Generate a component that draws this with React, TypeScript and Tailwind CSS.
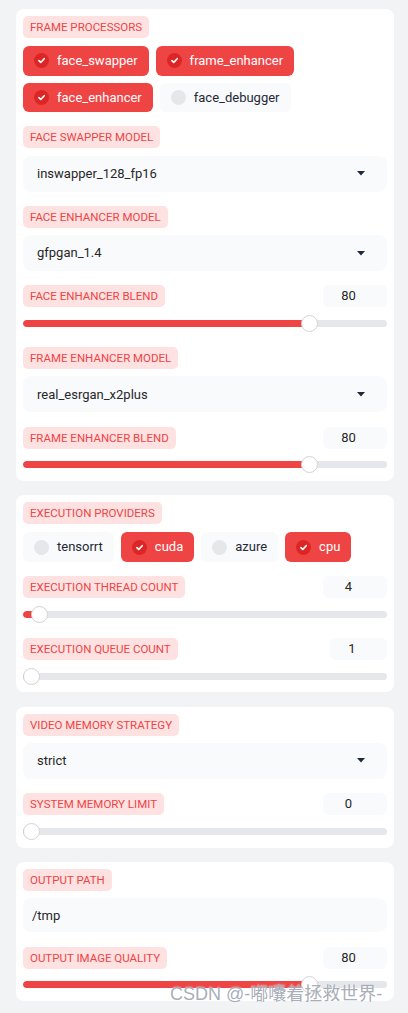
import React from "react";

const FONT = { fontFamily: 'Roboto, "Noto Sans", "Noto Sans CJK SC", sans-serif' };

function Label({ children }: { children: React.ReactNode }) {
  return (
    <div className="self-start h-[22px] leading-[22px] px-[7px] rounded-[5px] bg-[#fee2e2] text-[#ef4444] text-[11.5px] uppercase whitespace-nowrap">
      {children}
    </div>
  );
}

function Check() {
  return (
    <span className="w-[15px] h-[15px] rounded-full bg-[#dc2626] flex items-center justify-center shrink-0">
      <svg width="9" height="9" viewBox="0 0 12 12" fill="none">
        <path d="M2.5 6.3 L5 8.6 L9.6 3.6" stroke="white" strokeWidth="2.2" strokeLinecap="round" strokeLinejoin="round" />
      </svg>
    </span>
  );
}

function Chip({ label, on }: { label: string; on: boolean }) {
  return (
    <div
      className={
        on
          ? "h-[29.5px] flex items-center gap-[8px] pl-[11px] pr-[11px] rounded-[6px] bg-[#ef4444] text-white text-[13px]"
          : "h-[29.5px] flex items-center gap-[8px] pl-[11px] pr-[11px] rounded-[6px] bg-[#f9fafb] text-[#1f2937] text-[13px]"
      }
    >
      {on ? <Check /> : <span className="w-[15px] h-[15px] rounded-full bg-[#e5e7eb] shrink-0" />}
      <span>{label}</span>
    </div>
  );
}

function Dropdown({ value }: { value: string }) {
  return (
    <div className="h-[36px] rounded-[8px] bg-[#f9fafb] flex items-center justify-between pl-[14px] pr-[22px] text-[13px] text-[#27272a]">
      <span>{value}</span>
      <svg width="8" height="5" viewBox="0 0 8 5">
        <path d="M0 0 H8 L4 4.5 Z" fill="#1f2937" />
      </svg>
    </div>
  );
}

function Slider({ pct }: { pct: number }) {
  const usable = 364 - 17;
  const left = pct * usable;
  return (
    <div className="relative h-[18px]">
      <div className="absolute left-0 right-0 top-[5.5px] h-[7px] rounded-full bg-[#e5e7eb] overflow-hidden">
        <div className="h-full bg-[#ef4444] rounded-full" style={{ width: left + 8 }} />
      </div>
      <div
        className="absolute top-[0.5px] w-[17px] h-[17px] rounded-full bg-white border border-[#d4d4d8]"
        style={{ left }}
      />
    </div>
  );
}

function NumberRow({ label, value, narrow }: { label: string; value: string; narrow?: boolean }) {
  return (
    <div className="flex items-center justify-between">
      <Label>{label}</Label>
      <div
        className={
          (narrow ? "w-[57px]" : "w-[64px]") +
          " h-[22px] rounded-[6px] bg-[#f9fafb] text-[13px] text-[#27272a] text-center pr-[13px] leading-[22px]"
        }
      >
        {value}
      </div>
    </div>
  );
}

function Group({ children, gap8 }: { children: React.ReactNode; gap8?: boolean }) {
  return <div className={gap8 ? "flex flex-col gap-[8px]" : "flex flex-col gap-[7.3px]"}>{children}</div>;
}

function Card({ children }: { children: React.ReactNode }) {
  return <div className="bg-white rounded-[8px] p-[7px] flex flex-col gap-[14.3px]">{children}</div>;
}

export default function App() {
  return (
    <div className="relative min-h-[1013px] bg-[#f2f3f5] pl-[16px] pr-[14px] pt-[9px] pb-[11px] flex flex-col gap-[14.5px]" style={FONT}>
      <Card>
        <Group gap8>
          <Label>Frame Processors</Label>
          <div className="flex flex-wrap gap-[7px]">
            <Chip label="face_swapper" on />
            <Chip label="frame_enhancer" on />
            <Chip label="face_enhancer" on />
            <Chip label="face_debugger" on={false} />
          </div>
        </Group>
        <Group>
          <Label>Face Swapper Model</Label>
          <Dropdown value="inswapper_128_fp16" />
        </Group>
        <Group>
          <Label>Face Enhancer Model</Label>
          <Dropdown value="gfpgan_1.4" />
        </Group>
        <Group>
          <NumberRow label="Face Enhancer Blend" value="80" />
          <Slider pct={0.8} />
        </Group>
        <Group>
          <Label>Frame Enhancer Model</Label>
          <Dropdown value="real_esrgan_x2plus" />
        </Group>
        <Group>
          <NumberRow label="Frame Enhancer Blend" value="80" />
          <Slider pct={0.8} />
        </Group>
      </Card>

      <Card>
        <Group gap8>
          <Label>Execution Providers</Label>
          <div className="flex flex-wrap gap-[7px]">
            <Chip label="tensorrt" on={false} />
            <Chip label="cuda" on />
            <Chip label="azure" on={false} />
            <Chip label="cpu" on />
          </div>
        </Group>
        <Group>
          <NumberRow label="Execution Thread Count" value="4" />
          <Slider pct={3 / 127} />
        </Group>
        <Group>
          <NumberRow label="Execution Queue Count" value="1" narrow />
          <Slider pct={0} />
        </Group>
      </Card>

      <Card>
        <Group>
          <Label>Video Memory Strategy</Label>
          <Dropdown value="strict" />
        </Group>
        <Group>
          <NumberRow label="System Memory Limit" value="0" />
          <Slider pct={0} />
        </Group>
      </Card>

      <Card>
        <Group>
          <Label>Output Path</Label>
          <div className="h-[34px] rounded-[8px] bg-[#f9fafb] flex items-center px-[9px] text-[13px] text-[#27272a]">
            /tmp
          </div>
        </Group>
        <Group>
          <NumberRow label="Output Image Quality" value="80" />
          <Slider pct={0.8} />
        </Group>
      </Card>

      <div
        className="absolute left-[170px] top-[981px] text-[18px] text-[#9ca3af]/90 whitespace-nowrap [text-shadow:0_0_2px_#ffffff]"
        style={{ fontFamily: '"Liberation Sans", "Noto Sans CJK SC", sans-serif' }}
      >
        CSDN @-嘟囔着拯救世界-
      </div>
    </div>
  );
}
